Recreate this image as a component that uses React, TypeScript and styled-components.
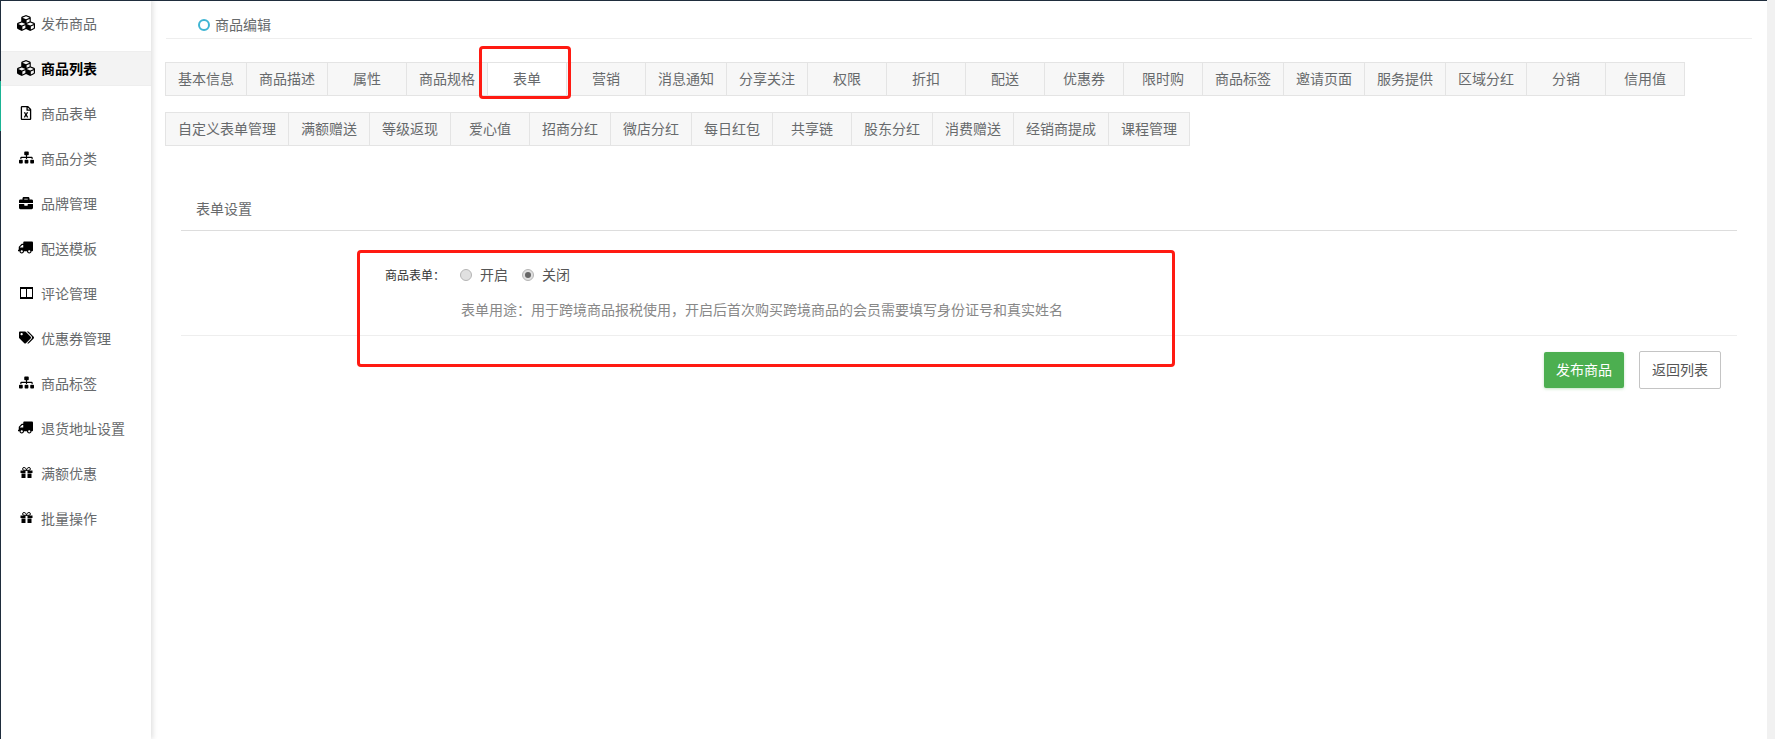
import styled, { createGlobalStyle } from "styled-components";
import type { ComponentType } from "react";
import {
  FaBriefcase,
  FaCubes,
  FaRegFileExcel,
  FaSitemap,
  FaTags,
  FaTruck,
} from "react-icons/fa";

const GlobalStyle = createGlobalStyle`
  html, body {
    margin: 0;
    padding: 0;
    background: #ffffff;
  }
  * {
    box-sizing: border-box;
  }
`;

const Page = styled.div`
  position: relative;
  display: flex;
  width: 1775px;
  height: 739px;
  overflow: hidden;
  background: #ffffff;
  font: 400 14px "Liberation Sans", "Noto Sans CJK SC", sans-serif;
  color: #676a6c;
`;

const GreenMark = styled.div`
  position: absolute;
  left: 0;
  top: 81px;
  width: 1px;
  height: 50px;
  background: #1ab394;
`;

const Sidebar = styled.nav`
  flex: 0 0 151px;
  padding-top: 5px;
  border-top: 1px solid #1f2d3d;
  border-left: 1px solid #1f2d3d;
  box-shadow: 2px 0 5px rgba(0, 0, 0, 0.12);
`;

const SideItem = styled.div<{ $active?: boolean }>`
  display: flex;
  align-items: center;
  height: 35px;
  margin-bottom: 10px;
  padding: 0 0 2px 16px;
  background: ${(p) => (p.$active ? "#f3f3f3" : "transparent")};
  color: ${(p) => (p.$active ? "#000000" : "#676a6c")};
  font-weight: ${(p) => (p.$active ? 700 : 400)};
  border-top: ${(p) => (p.$active ? "1px solid #eeeeee" : "0")};
  border-bottom: ${(p) => (p.$active ? "1px solid #eeeeee" : "0")};
`;

const SideIcon = styled.span<{ $flip?: boolean; $size: number }>`
  display: flex;
  justify-content: center;
  width: 18px;
  margin-right: 6px;
  color: #000000;
  font-size: ${(p) => p.$size}px;
  transform: ${(p) => (p.$flip ? "scaleX(-1)" : "none")};
`;

const Main = styled.main`
  flex: 1;
  padding-left: 15px;
  border-top: 1px solid #1f2d3d;
`;

const TitleBar = styled.div`
  display: flex;
  align-items: center;
  height: 38px;
  margin-right: 15px;
  padding: 8px 0 0 32px;
  border-bottom: 1px solid #eeeeee;
  font-size: 14px;
`;

const TitleDot = styled.span`
  width: 12px;
  height: 12px;
  margin: 2px 5px 0 0;
  border: 2px solid #3fb5d3;
  border-radius: 50%;
`;

const TabRow = styled.div<{ $first?: boolean }>`
  display: flex;
  margin-left: -1px;
  margin-top: ${(p) => (p.$first ? "23px" : "16px")};
`;

const Tab = styled.div<{ $active?: boolean }>`
  position: relative;
  display: flex;
  align-items: center;
  justify-content: center;
  min-width: 80px;
  height: 34px;
  margin-right: -1px;
  padding: 0 12px 2px;
  background: ${(p) => (p.$active ? "#ffffff" : "#f7f7f7")};
  border: 1px solid #e4e4e4;
  white-space: nowrap;
`;

const TabMark = styled.div`
  position: absolute;
  z-index: 2;
  top: -17px;
  left: -9px;
  right: -5px;
  bottom: -4px;
  border: 3px solid #ff1a12;
  border-radius: 4px;
`;

const SectionTitle = styled.div`
  margin: 47px 30px 0 15px;
  height: 38px;
  padding-left: 15px;
  border-bottom: 1px solid #dddddd;
  line-height: 33px;
`;

const FormBlock = styled.div`
  position: relative;
  margin: 0 30px 0 15px;
  height: 105px;
  padding-top: 33px;
  border-bottom: 1px solid #eeeeee;
`;

const FormMark = styled.div`
  position: absolute;
  top: 19px;
  left: 176px;
  width: 818px;
  height: 117px;
  border: 3px solid #ff1a12;
  border-radius: 4px;
`;

const FormRow = styled.div`
  display: flex;
  align-items: center;
  height: 22px;
  padding-left: 204px;
`;

const FormLabel = styled.label`
  width: 75px;
  padding-bottom: 2px;
  color: #333333;
  font-size: 12px;
`;

const Radio = styled.span<{ $on?: boolean }>`
  position: relative;
  width: 12px;
  height: 12px;
  margin-right: 8px;
  border: 1px solid #b5b5b5;
  border-radius: 50%;
  background: #e0e0e0;
  &::after {
    content: "";
    display: ${(p) => (p.$on ? "block" : "none")};
    position: absolute;
    top: 2px;
    left: 2px;
    width: 6px;
    height: 6px;
    border-radius: 50%;
    background: #666666;
  }
`;

const RadioText = styled.span`
  margin-right: 14px;
  padding-bottom: 2px;
  color: #555555;
`;

const Hint = styled.div`
  margin-top: 13px;
  padding-left: 280px;
  color: #888888;
`;

const Actions = styled.div`
  display: flex;
  justify-content: flex-end;
  align-items: center;
  gap: 15px;
  margin: 15px 46px 0 0;
`;

const PublishButton = styled.button`
  width: 80px;
  height: 36px;
  padding: 0 0 2px;
  border: 0;
  border-radius: 2px;
  background: #4caf50;
  box-shadow: 0 1px 3px rgba(76, 175, 80, 0.35);
  color: #ffffff;
  font: inherit;
`;

const BackButton = styled.button`
  width: 82px;
  height: 38px;
  padding: 0 0 2px;
  border: 1px solid #c4c4c4;
  border-radius: 2px;
  background: #ffffff;
  color: #555555;
  font: inherit;
`;

const ScrollTrack = styled.div`
  flex: 0 0 8px;
  background: #f1f1f1;
`;

const ColumnsIcon = () => (
  <svg width="13" height="12" viewBox="0 0 13 12">
    <path fill="currentColor" fillRule="evenodd" d="M0 0h13v12H0z M1 2v8h5V2z M7 2v8h5V2z" />
  </svg>
);

const GiftIcon = () => (
  <svg width="13" height="11" viewBox="0 0 13 11">
    <path
      fill="none"
      stroke="currentColor"
      d="M4 .5a1.4 1.4 0 0 0 0 2.8h5a1.4 1.4 0 0 0 0-2.8C7.6.5 6.5 2 6.5 3.3 6.5 2 5.4.5 4 .5z"
    />
    <path fill="currentColor" d="M.5 3.5h5v2.5h-5z M7.5 3.5h5v2.5h-5z M1.5 6.5h4V11h-4z M7.5 6.5h4V11h-4z" />
  </svg>
);

const sideItems: { label: string; icon: ComponentType; size: number; flip?: boolean; active?: boolean }[] = [
  { label: "发布商品", icon: FaCubes, size: 18 },
  { label: "商品列表", icon: FaCubes, size: 18, active: true },
  { label: "商品表单", icon: FaRegFileExcel, size: 14 },
  { label: "商品分类", icon: FaSitemap, size: 15 },
  { label: "品牌管理", icon: FaBriefcase, size: 14 },
  { label: "配送模板", icon: FaTruck, size: 15, flip: true },
  { label: "评论管理", icon: ColumnsIcon, size: 14 },
  { label: "优惠券管理", icon: FaTags, size: 15 },
  { label: "商品标签", icon: FaSitemap, size: 15 },
  { label: "退货地址设置", icon: FaTruck, size: 15, flip: true },
  { label: "满额优惠", icon: GiftIcon, size: 12 },
  { label: "批量操作", icon: GiftIcon, size: 12 },
];

const tabsOne = [
  "基本信息", "商品描述", "属性", "商品规格", "表单", "营销", "消息通知", "分享关注", "权限", "折扣",
  "配送", "优惠券", "限时购", "商品标签", "邀请页面", "服务提供", "区域分红", "分销", "信用值",
];

const tabsTwo = [
  "自定义表单管理", "满额赠送", "等级返现", "爱心值", "招商分红", "微店分红", "每日红包", "共享链",
  "股东分红", "消费赠送", "经销商提成", "课程管理",
];

const App = () => {
  return (
    <Page>
      <GlobalStyle />
      <GreenMark />
      <Sidebar>
        {sideItems.map((item) => (
          <SideItem key={item.label} $active={item.active}>
            <SideIcon $flip={item.flip} $size={item.size}>
              <item.icon />
            </SideIcon>
            {item.label}
          </SideItem>
        ))}
      </Sidebar>
      <Main>
        <TitleBar>
          <TitleDot />
          商品编辑
        </TitleBar>
        <TabRow $first>
          {tabsOne.map((el) => (
            <Tab key={el} $active={el === "表单"}>
              {el}
              {el === "表单" && <TabMark />}
            </Tab>
          ))}
        </TabRow>
        <TabRow>
          {tabsTwo.map((el) => (
            <Tab key={el}>{el}</Tab>
          ))}
        </TabRow>
        <SectionTitle>表单设置</SectionTitle>
        <FormBlock>
          <FormMark />
          <FormRow>
            <FormLabel>商品表单：</FormLabel>
            <Radio />
            <RadioText>开启</RadioText>
            <Radio $on />
            <RadioText>关闭</RadioText>
          </FormRow>
          <Hint>表单用途：用于跨境商品报税使用，开启后首次购买跨境商品的会员需要填写身份证号和真实姓名</Hint>
        </FormBlock>
        <Actions>
          <PublishButton>发布商品</PublishButton>
          <BackButton>返回列表</BackButton>
        </Actions>
      </Main>
      <ScrollTrack />
    </Page>
  );
};

export default App;
